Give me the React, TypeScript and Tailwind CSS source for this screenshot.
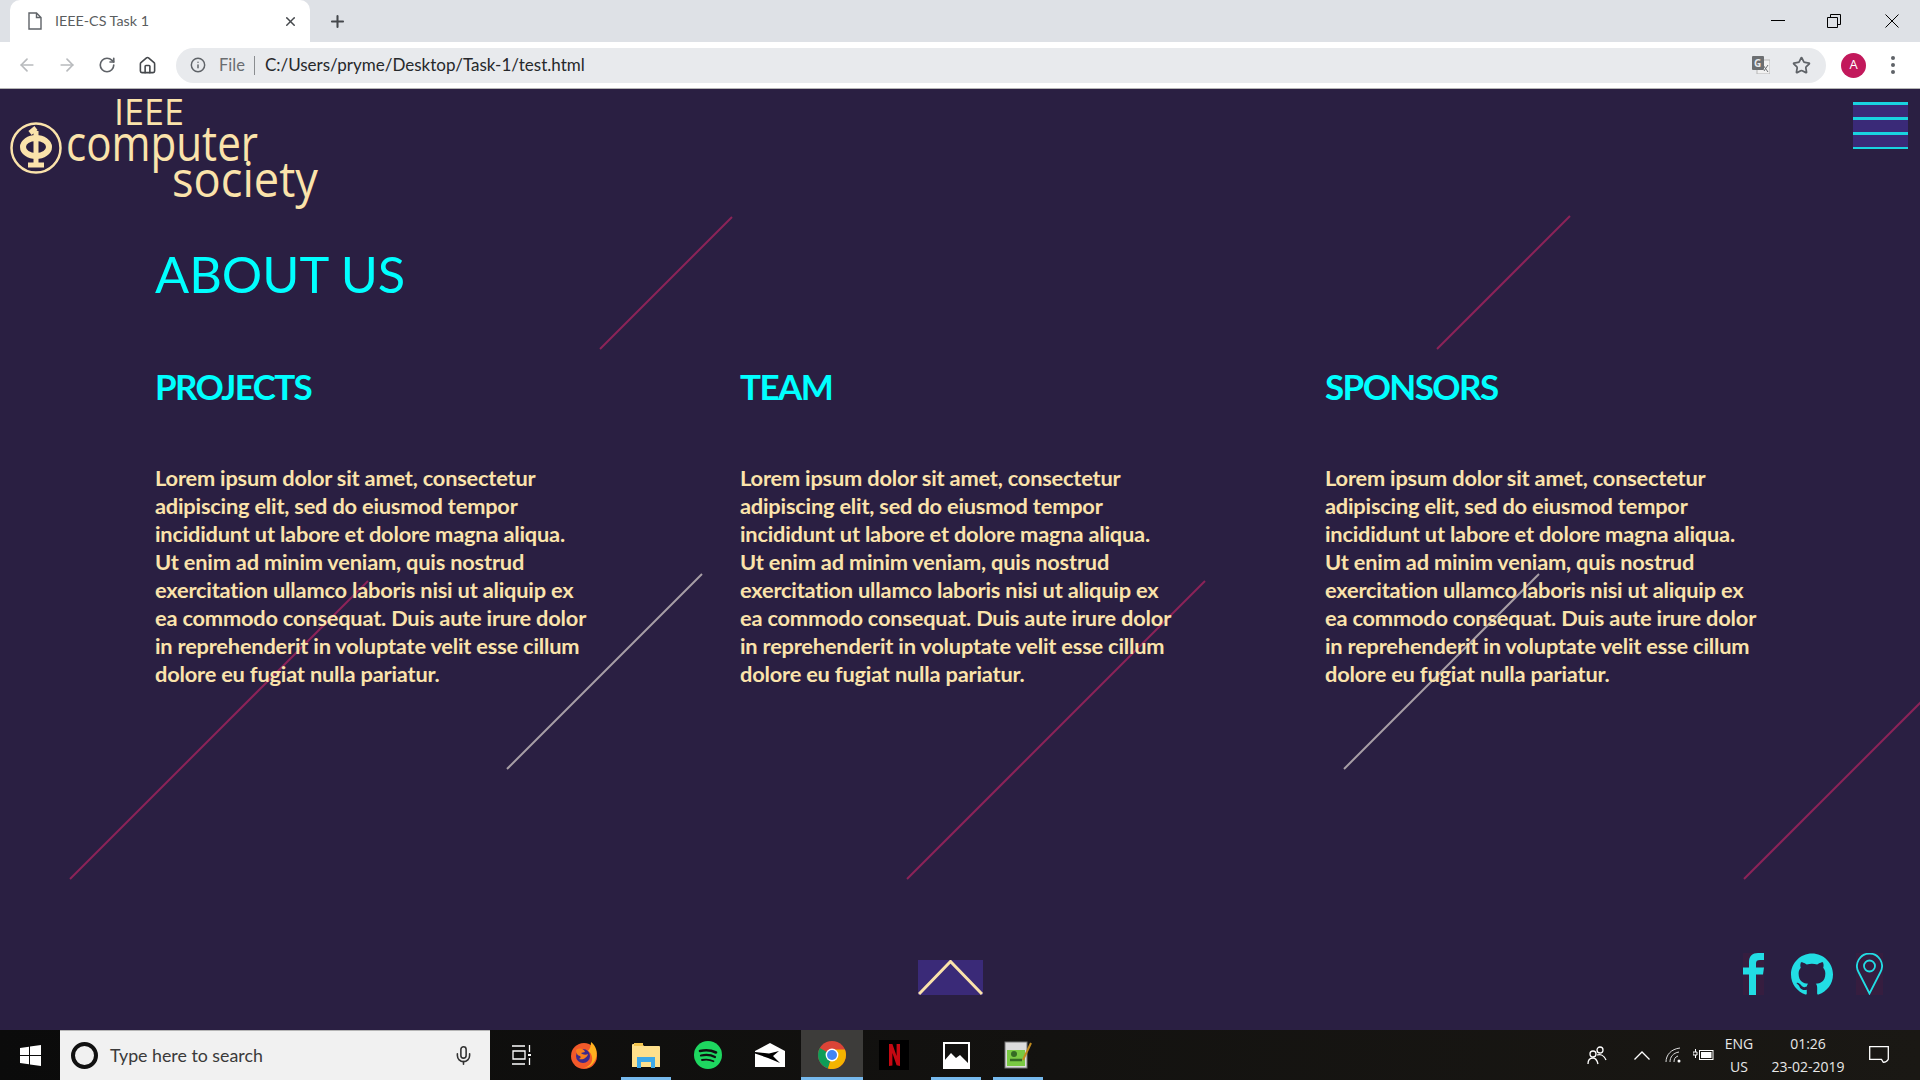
import { ArrowLeft, ArrowRight, RotateCw, Home, Info, Star, Plus, X, Mic } from 'lucide-react';
import { SiGithub } from 'react-icons/si';

const LOREM = [
  'Lorem ipsum dolor sit amet, consectetur',
  'adipiscing elit, sed do eiusmod tempor',
  'incididunt ut labore et dolore magna aliqua.',
  'Ut enim ad minim veniam, quis nostrud',
  'exercitation ullamco laboris nisi ut aliquip ex',
  'ea commodo consequat. Duis aute irure dolor',
  'in reprehenderit in voluptate velit esse cillum',
  'dolore eu fugiat nulla pariatur.',
];

function Column({ title }: { title: string }) {
  return (
    <div>
      <h2 className="text-[35px] leading-[44px] font-bold text-[#00ffff] font-['Lato',sans-serif] tracking-[-1.6px]">{title}</h2>
      <div className="mt-[56px] text-[21.8px] leading-[28px] font-bold text-[#fbe3ab] font-['Lato',sans-serif] tracking-[-0.2px] whitespace-nowrap">
        {LOREM.map((l) => (
          <div key={l}>{l}</div>
        ))}
      </div>
    </div>
  );
}

function Logo() {
  return (
    <svg width="330" height="125" viewBox="0 0 330 125" className="block overflow-visible">
      <g fill="#fbe3ab" fontFamily="'Open Sans', sans-serif">
        <text x="114" y="36" fontSize="36" textLength="70" lengthAdjust="spacingAndGlyphs">IEEE</text>
        <text x="66" y="72" fontSize="50" textLength="192" lengthAdjust="spacingAndGlyphs">computer</text>
        <text x="172" y="108" fontSize="50" textLength="146" lengthAdjust="spacingAndGlyphs">society</text>
      </g>
      <circle cx="36" cy="59" r="24.5" fill="none" stroke="#fbe3ab" strokeWidth="2.5" />
      <ellipse cx="36" cy="58" rx="13" ry="9" fill="none" stroke="#fbe3ab" strokeWidth="6" />
      <path d="M36 42v33M28 76h16M30 44l6-5" stroke="#fbe3ab" strokeWidth="5" fill="none" />
    </svg>
  );
}

function Chrome() {
  return (
    <div className="flex flex-col bg-white">
      <div className="h-[42px] bg-[#dee1e6] flex items-end pl-[10px]">
        <div className="w-[300px] h-[42px] bg-white rounded-t-[10px] flex items-center pl-[18px] pr-[12px] text-[#5a5d60]">
          <svg width="14" height="18" viewBox="0 0 14 18" fill="none" stroke="#5f6368" strokeWidth="1.4">
            <path d="M1 1h7.5L13 5.5V17H1zM8.5 1v4.500H13" />
          </svg>
          <span className="ml-[13px] text-[14.3px] font-['Lato',sans-serif]">IEEE-CS Task 1</span>
          <X className="ml-auto" size={15} strokeWidth={2.4} color="#45484c" />
        </div>
        <div className="h-[42px] ml-[18px] flex items-center">
          <Plus size={19} strokeWidth={2.6} color="#45484c" />
        </div>
        <div className="ml-auto h-[42px] flex items-center text-black">
          <svg width="14" height="2" viewBox="0 0 14 2" className="mr-[42px]">
            <rect width="14" height="1" fill="#000" />
          </svg>
          <svg width="14" height="14" viewBox="0 0 14 14" fill="none" stroke="#000" strokeWidth="1" className="mr-[44px]">
            <path d="M.5 3.500h10v10H.5zM3.500 3.500v-3h10v10h-3" />
          </svg>
          <svg width="14" height="14" viewBox="0 0 14 14" fill="none" stroke="#000" strokeWidth="1" className="mr-[21px]">
            <path d="M.5.500l13 13M13.500.500l-13 13" />
          </svg>
        </div>
      </div>
      <div className="h-[47px] border-b border-[#b4b4b4] flex items-center pl-[17px] pr-[18px]">
        <ArrowLeft size={20} color="#b8babd" strokeWidth={2} />
        <ArrowRight size={20} color="#b8babd" strokeWidth={2} className="ml-[20px]" />
        <RotateCw size={18} color="#5f6368" strokeWidth={2.2} className="ml-[21px]" />
        <Home size={19} color="#45484c" strokeWidth={2} className="ml-[22px]" />
        <div className="ml-[19px] w-[1650px] h-[35px] rounded-full bg-[#e8eaed] flex items-center pl-[14px] pr-[14px] font-['Lato',sans-serif]">
          <Info size={16} color="#5f6368" strokeWidth={2.2} />
          <span className="ml-[13px] text-[16.5px] text-[#6a6d70]">File</span>
          <span className="ml-[9px] w-px h-[19px] bg-[#8a8d90]" />
          <span className="ml-[10px] text-[17px] text-[#26282b]">C:/Users/pryme/Desktop/Task-1/test.html</span>
          <svg width="18" height="18" viewBox="0 0 18 18" className="ml-auto mr-[22px]">
            <rect x="5" y="4" width="13" height="14" fill="#f1f1f1" stroke="#b5b5b5" />
            <rect x="0" y="0" width="12" height="14" rx="1" fill="#6b6e71" />
            <text x="2" y="11" fontSize="10" fontWeight="700" fill="#e8eaed" fontFamily="'Open Sans', sans-serif">G</text>
            <path d="M11 9l5 7M16 9l-4 6" stroke="#6b6e71" strokeWidth="1" fill="none" />
          </svg>
          <Star size={19} color="#5f6368" strokeWidth={2.2} className="mr-[1px]" />
        </div>
        <div className="ml-[15px] w-[25px] h-[25px] rounded-full bg-[#c2185b] text-white text-[13px] flex items-center justify-center font-['Open_Sans',sans-serif]">A</div>
        <div className="ml-[25px] flex flex-col gap-[3px]">
          <span className="w-[4px] h-[4px] rounded-full bg-[#5f6368]" />
          <span className="w-[4px] h-[4px] rounded-full bg-[#5f6368]" />
          <span className="w-[4px] h-[4px] rounded-full bg-[#5f6368]" />
        </div>
      </div>
    </div>
  );
}

function Slot({ active, open, children }: { active?: boolean; open?: boolean; children: React.ReactNode }) {
  return (
    <div className={`relative w-[62px] h-[50px] flex items-center justify-center ${active ? 'bg-[#3d3c3a]' : ''}`}>
      {children}
      {open && <span className="absolute bottom-0 left-[6px] right-[6px] h-[3px] bg-[#76b9ed]" />}
      {active && <span className="absolute bottom-0 left-0 right-0 h-[3px] bg-[#76b9ed]" />}
    </div>
  );
}

function Taskbar() {
  return (
    <div className="h-[50px] bg-gradient-to-r from-[#0b0b0b] to-[#1a1814] flex items-center text-white">
      <div className="w-[60px] flex justify-center">
        <svg width="21" height="21" viewBox="0 0 21 21" fill="#fff">
          <path d="M0 3l9-1.300V10H0zM10 1.500L21 0v10H10zM0 11h9v8.300L0 18zM10 11h11v10l-11-1.500z" />
        </svg>
      </div>
      <div className="w-[430px] mr-[1px] h-[50px] bg-[#f1f1f1] border-t border-[#b5b5b5] flex items-center pl-[11px] pr-[16px]">
        <span className="w-[27px] h-[27px] rounded-full border-[4px] border-[#111]" />
        <span className="ml-[12px] text-[17.8px] text-[#3a3a3a] font-['Lato',sans-serif]">Type here to search</span>
        <Mic className="ml-auto" size={21} color="#333" strokeWidth={1.8} />
      </div>
      <Slot>
        <svg width="20" height="20" viewBox="0 0 20 20" fill="none" stroke="#fff" strokeWidth="1.3">
          <path d="M0 1h13M0 19h13M1 6h12v8H1zM17.500 0v7M17.500 13v7" />
          <rect x="16" y="9" width="3" height="2" fill="#fff" stroke="none" />
        </svg>
      </Slot>
      <Slot>
        <svg width="28" height="28" viewBox="0 0 28 28">
          <circle cx="14" cy="15" r="13" fill="#f2592a" />
          <path d="M21 1c5 4 7 10 5 16-2 6-7 10-12 10 6-2 9-6 8-11-.5-3-2-5-4-6 2-2 3-5 3-9z" fill="#ffb01f" />
          <circle cx="13" cy="15" r="7" fill="#3a2a8c" />
          <path d="M6 9c4-3 8-1 9 2l-4 1c2 2 5 2 7 1-1 4-5 6-9 5 2-1 2-2 1-3-2 0-4-3-4-6z" fill="#f77f1c" />
        </svg>
      </Slot>
      <Slot open>
        <svg width="28" height="26" viewBox="0 0 28 26">
          <path d="M0 3a1 1 0 0 1 1-1h9l2 2h15a1 1 0 0 1 1 1v20H0z" fill="#ffe08c" />
          <rect x="2" y="1" width="9" height="3" fill="#f4c64f" />
          <path d="M5 26V15h18v11h-4v-6H9v6z" fill="#3fa9e8" />
        </svg>
      </Slot>
      <Slot>
        <svg width="28" height="28" viewBox="0 0 28 28" fill="none">
          <circle cx="14" cy="14" r="14" fill="#1ed760" />
          <path d="M6 10c6-1.500 11-1 16 1.500" stroke="#111" strokeWidth="2.6" strokeLinecap="round" />
          <path d="M7 14.500c5-1 10-.7 14 1.500" stroke="#111" strokeWidth="2.200" strokeLinecap="round" />
          <path d="M8 19c4-.8 8-.5 11.500 1.200" stroke="#111" strokeWidth="1.800" strokeLinecap="round" />
        </svg>
      </Slot>
      <Slot>
        <svg width="30" height="24" viewBox="0 0 30 24">
          <path d="M0 8L15 0l15 8v16H0z" fill="#fff" />
          <path d="M0 9l14 1.500L24 8l-6 5 7 7-12-5L0 10.500z" fill="#000" />
        </svg>
      </Slot>
      <Slot active>
        <svg width="28" height="28" viewBox="0 0 28 28">
          <circle cx="14" cy="14" r="14" fill="#db4437" />
          <path d="M14 14L1.900 7A14 14 0 0 0 10 27.400z" fill="#0f9d58" />
          <path d="M14 14l-4 13.400A14 14 0 0 0 28 14c0-2-.4-4-1.200-5.600H14z" fill="#f4b400" />
          <circle cx="14" cy="14" r="6.400" fill="#fff" />
          <circle cx="14" cy="14" r="5" fill="#4285f4" />
        </svg>
      </Slot>
      <Slot>
        <div className="w-[30px] h-[30px] bg-black flex items-center justify-center">
          <svg width="11" height="22" viewBox="0 0 11 22" fill="#c40812">
            <path d="M0 0h3.400l4.200 12V0H11v22l-3.400-.8L3.400 9v12.400L0 22z" />
          </svg>
        </div>
      </Slot>
      <Slot open>
        <svg width="27" height="27" viewBox="0 0 27 27">
          <rect x="1" y="1" width="25" height="25" fill="none" stroke="#fff" strokeWidth="2" />
          <path d="M1 26V19l7-8 5 5 4-3 9 9v4z" fill="#fff" />
        </svg>
      </Slot>
      <Slot open>
        <svg width="28" height="28" viewBox="0 0 28 28">
          <rect x="1" y="1" width="22" height="26" fill="#dcdcdc" stroke="#777" />
          <rect x="3" y="9" width="18" height="16" fill="#7ac943" />
          <circle cx="10" cy="13" r="3" fill="#356b24" />
          <path d="M6 19h12" stroke="#356b24" strokeWidth="2.500" />
          <path d="M19 19L27 2" stroke="#c08a1e" strokeWidth="2" />
        </svg>
      </Slot>
      <div className="ml-auto flex items-center h-full text-[#e8e8e8] font-['Open_Sans',sans-serif]">
        <svg width="20" height="20" viewBox="0 0 20 20" fill="none" stroke="#fff" strokeWidth="1.300">
          <circle cx="6" cy="9" r="3" />
          <circle cx="13" cy="5" r="3" />
          <path d="M1 19c0-4 2-6 5-6s4 2 5 6M10 10c3-1 7 0 9 5" />
        </svg>
        <svg width="16" height="9" viewBox="0 0 16 9" fill="none" stroke="#fff" strokeWidth="1.300" className="ml-[27px]">
          <path d="M.5 8.500L8 1l7.500 7.500" />
        </svg>
        <svg width="16" height="16" viewBox="0 0 16 16" fill="none" stroke="#ddd" strokeWidth="1" className="ml-[15px]">
          <path d="M1 15C1 8 6 2 15 1M5 15c0-5 3-9 9-10M9 15c0-3 1-5 4-6" />
          <circle cx="14" cy="14" r="1.500" fill="#fff" stroke="none" />
        </svg>
        <svg width="21" height="12" viewBox="0 0 21 12" className="ml-[12px]">
          <rect x="6.500" y="1.500" width="13.500" height="9" fill="none" stroke="#fff" />
          <rect x="8" y="3" width="10.500" height="6" fill="#fff" />
          <path d="M2.500 0v3M0 3h4v3H0zM2.500 6v3" stroke="#fff" fill="none" />
        </svg>
        <div className="w-[50px] text-center text-[14px] leading-[23px]">
          <div>ENG</div>
          <div>US</div>
        </div>
        <div className="w-[88px] text-center text-[14px] leading-[23px]">
          <div>01:26</div>
          <div>23-02-2019</div>
        </div>
        <svg width="20" height="18" viewBox="0 0 20 18" fill="none" stroke="#fff" strokeWidth="1.300" className="ml-[17px] mr-[31px]">
          <path d="M.7.700h18.600v12.600c-1 2-3 3-5 3-1-1-1-2-2-3H.7z" />
        </svg>
      </div>
    </div>
  );
}

export default function App() {
  return (
    <div className="w-[1920px] h-[1080px] flex flex-col overflow-hidden">
      <Chrome />
      <main className="relative flex-1 bg-[#2a1f42] overflow-hidden flex flex-col">
        {/* diagonal streaks behind the text */}
        <svg className="absolute inset-0 w-full h-full" viewBox="0 0 1920 941">
          <g stroke="#8c2358" strokeWidth="2">
            <line x1="600" y1="260" x2="732" y2="128" />
            <line x1="1437" y1="260" x2="1570" y2="127" />
            <line x1="70" y1="790" x2="368" y2="492" />
            <line x1="907" y1="790" x2="1205" y2="492" />
            <line x1="1744" y1="790" x2="2042" y2="492" />
          </g>
          <g stroke="#a89fa6" strokeWidth="2">
            <line x1="507" y1="680" x2="702" y2="485" />
            <line x1="1344" y1="680" x2="1539" y2="485" />
          </g>
        </svg>

        <div className="relative flex justify-between items-start">
          <Logo />
          <div className="mt-[13px] mr-[12px] w-[55px] h-[47px] bg-[#3a2a78] flex flex-col justify-between">
            <span className="h-[3px] bg-[#19d3e0]" />
            <span className="h-[3px] bg-[#19d3e0]" />
            <span className="h-[3px] bg-[#19d3e0]" />
            <span className="h-[2px] bg-[#19d3e0]" />
          </div>
        </div>

        <div className="relative pl-[155px]">
          <h1 className="mt-[28px] text-[50.500px] leading-[64px] font-normal text-[#00ffff] font-['Lato',sans-serif]">ABOUT US</h1>
          <div className="mt-[58px] grid grid-cols-[585px_585px_585px]">
            <Column title="PROJECTS" />
            <Column title="TEAM" />
            <Column title="SPONSORS" />
          </div>
        </div>

        <div className="relative mt-auto pb-[35px] pl-[918px] pr-[37px] flex items-end">
          <svg width="65" height="35" viewBox="0 0 65 35" className="bg-[#3a2a78]">
            <path d="M1 34L32.500 1.500 64 34" fill="none" stroke="#fbe3ab" strokeWidth="3" />
          </svg>
          <div className="ml-auto flex items-center">
            <div className="w-[21px] h-[42px] bg-[#361d3f]">
              <svg width="21" height="42" viewBox="0 0 21 42" fill="#22dde4">
                <path d="M6 42V21.500H0v-7h6V9c0-6 3.500-9 9-9h6v7h-4c-3 0-4 1-4 3.500v4h8l-1 7h-7V42z" />
              </svg>
            </div>
            <SiGithub size={42} color="#22dde4" className="ml-[27px]" />
            <div className="ml-[23px] w-[27px] h-[42px] bg-[#361d3f]">
              <svg width="27" height="42" viewBox="0 0 27 42" fill="none" stroke="#22dde4" strokeWidth="1.800">
                <path d="M13.500 40.500L2.500 19A12.500 12.500 0 1 1 24.500 19z" />
                <circle cx="13.500" cy="13" r="5.500" />
              </svg>
            </div>
          </div>
        </div>
      </main>
      <Taskbar />
    </div>
  );
}
